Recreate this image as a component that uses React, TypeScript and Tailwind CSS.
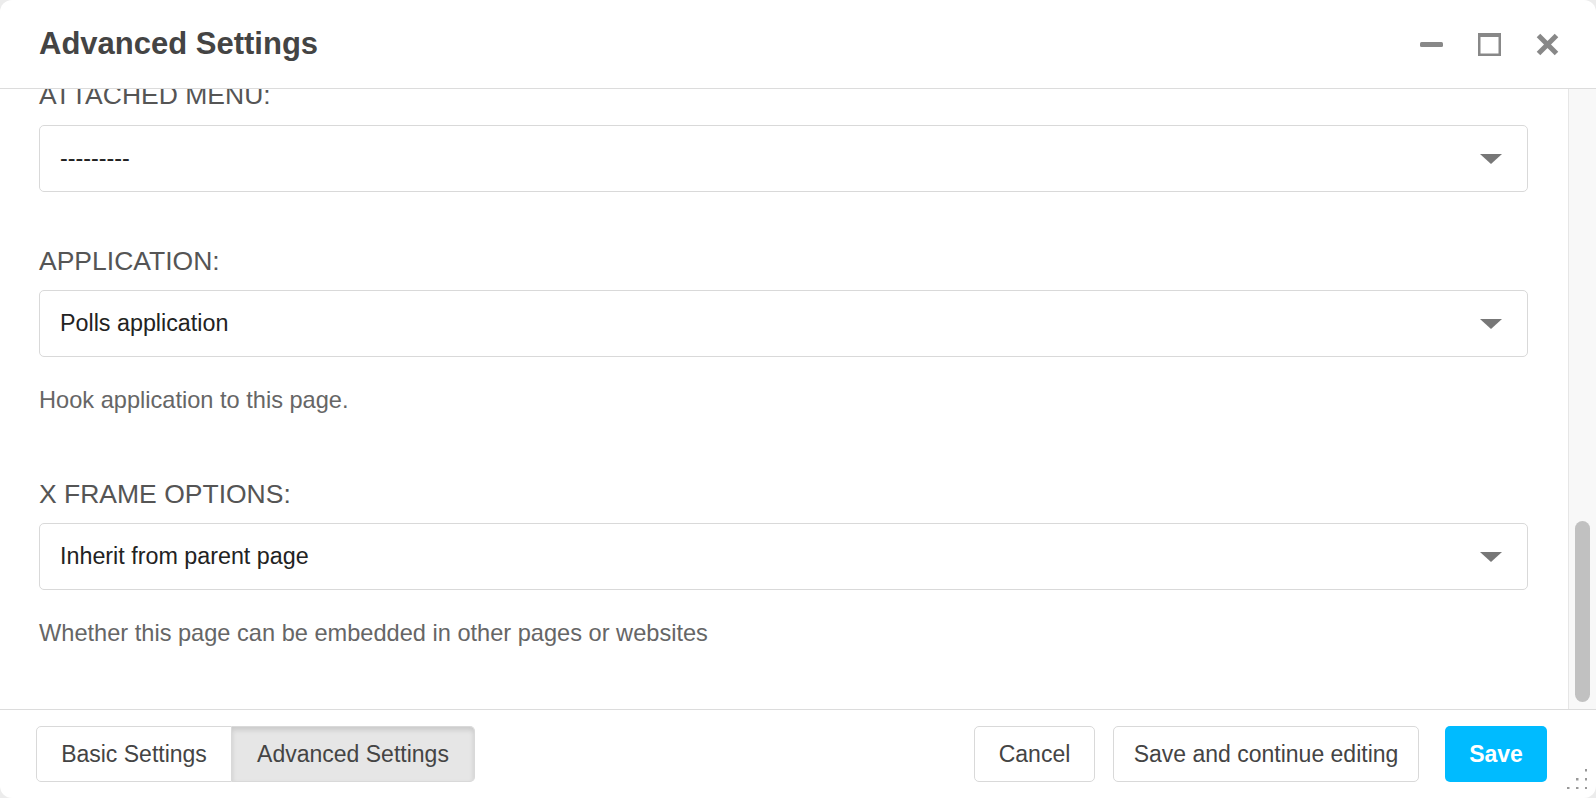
import React from "react";

function Caret() {
  return (
    <svg width="22" height="10" viewBox="0 0 22 10" className="shrink-0">
      <path d="M0 0 H22 L11 10 Z" fill="#777" />
    </svg>
  );
}

function Select({ value }: { value: string }) {
  return (
    <div className="h-[67px] border border-[#d9d9d9] rounded-[5px] bg-white flex items-center justify-between pl-[20px] pr-[25px]">
      <span className="text-[23.3px] text-[#222]">{value}</span>
      <Caret />
    </div>
  );
}

function Label({ children, className = "" }: { children: React.ReactNode; className?: string }) {
  return (
    <div className={"text-[26.5px] leading-[30px] text-[#555] uppercase " + className}>{children}</div>
  );
}

function Help({ children, className = "" }: { children: React.ReactNode; className?: string }) {
  return <div className={"text-[23.6px] leading-[28px] text-[#666] mt-[29px] " + className}>{children}</div>;
}

function FooterButton({ children, className = "" }: { children: React.ReactNode; className?: string }) {
  return (
    <button
      className={
        "h-[56px] whitespace-nowrap text-center text-[23px] border border-[#d9d9d9] rounded-[5px] text-[#444] " + className
      }
    >
      {children}
    </button>
  );
}

export default function App() {
  return (
    <div className="relative h-[798px] w-full bg-[#ececec] font-['Liberation_Sans',Arial,sans-serif]">
      <div className="h-full flex flex-col bg-white rounded-[12px] overflow-hidden">
        {/* header */}
        <div className="h-[89px] shrink-0 border-b border-[#dcdcdc] flex items-center justify-between pl-[39px] pr-[37px]">
          <h1 className="text-[31px] leading-none font-bold text-[#444] pb-[2px]">Advanced Settings</h1>
          <div className="flex items-center gap-[35px]">
            <svg width="23" height="23" viewBox="0 0 23 23">
              <rect x="0" y="9" width="23" height="5" rx="1.5" fill="#888" />
            </svg>
            <svg width="23" height="23" viewBox="0 0 23 23">
              <rect x="0" y="0" width="23" height="4" fill="#888" />
              <rect x="1.25" y="1.25" width="20.5" height="20.5" fill="none" stroke="#888" strokeWidth="2.5" />
            </svg>
            <svg width="23" height="23" viewBox="0 0 23 23">
              <path d="M2.5 2.5 L20.5 20.5 M20.5 2.5 L2.5 20.5" stroke="#888" strokeWidth="5" />
            </svg>
          </div>
        </div>

        {/* body (scrolled) */}
        <div className="flex-1 min-h-0 flex">
          <div className="flex-1 min-w-0 overflow-hidden pl-[39px] pr-[40px]">
            <div className="mt-[-9px]">
              <Label className="mb-[15px]">Attached menu:</Label>
              <Select value="---------" />

              <Label className="mt-[54px] mb-[14px]">Application:</Label>
              <Select value="Polls application" />
              <Help>Hook application to this page.</Help>

              <Label className="mt-[65px] mb-[14px]">X Frame Options:</Label>
              <Select value="Inherit from parent page" />
              <Help>Whether this page can be embedded in other pages or websites</Help>
            </div>
          </div>
          <div className="w-[28px] shrink-0 border-l border-[#e6e6e6] bg-[#f8f8f8]">
            <div className="ml-[6px] mt-[432px] w-[15px] h-[181px] rounded-full bg-[#c1c1c1]" />
          </div>
        </div>

        {/* footer */}
        <div className="h-[89px] shrink-0 border-t border-[#dcdcdc] flex items-center justify-between pl-[36px] pr-[49px]">
          <div className="flex">
            <FooterButton className="rounded-r-none w-[196px] bg-white">Basic Settings</FooterButton>
            <FooterButton className="rounded-l-none border-l-0 w-[243px] bg-[#e6e6e6] border-[#cfcfcf] shadow-[inset_0_3px_5px_rgba(0,0,0,0.125)]">
              Advanced Settings
            </FooterButton>
          </div>
          <div className="flex items-center">
            <FooterButton className="w-[121px] bg-white">Cancel</FooterButton>
            <FooterButton className="ml-[18px] w-[306px] bg-white">Save and continue editing</FooterButton>
            <button className="ml-[26px] h-[56px] w-[102px] rounded-[5px] bg-[#00bbff] text-white text-[23px] font-bold">
              Save
            </button>
          </div>
        </div>
      </div>

      {/* resize grip */}
      <svg className="absolute right-[9px] bottom-[9px]" width="20" height="20" viewBox="0 0 20 20">
        <rect x="18" y="0" width="2.5" height="2.5" fill="#999" />
        <rect x="9" y="9" width="2.5" height="2.5" fill="#999" />
        <rect x="18" y="9" width="2.5" height="2.5" fill="#999" />
        <rect x="0" y="18" width="2.5" height="2.5" fill="#999" />
        <rect x="9" y="18" width="2.5" height="2.5" fill="#999" />
        <rect x="18" y="18" width="2.5" height="2.5" fill="#999" />
      </svg>
    </div>
  );
}
